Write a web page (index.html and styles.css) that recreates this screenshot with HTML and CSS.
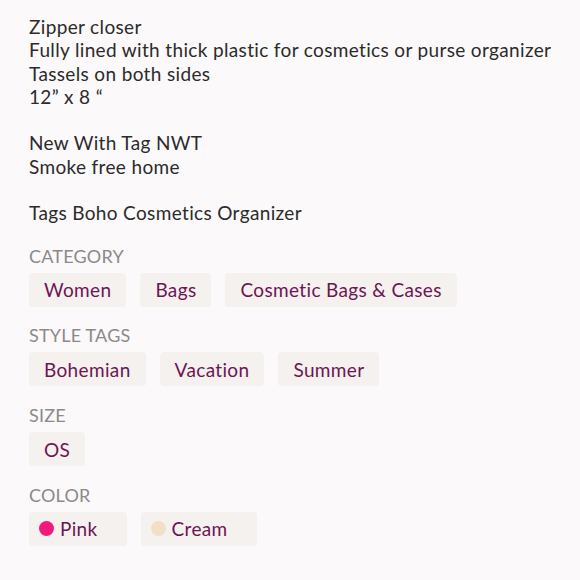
FILE: index.html
```html
<!DOCTYPE html>
<html>
<head>
<meta charset="utf-8">
<link rel="stylesheet" href="styles.css">
</head>
<body>
<div class="page">
  <div class="desc">Zipper closer
Fully lined with thick plastic for cosmetics or purse organizer
Tassels on both sides
12” x 8 “

New With Tag NWT
Smoke free home

Tags Boho Cosmetics Organizer</div>

  <div class="section">
    <div class="label">Category</div>
    <div class="tags">
      <span class="tag">Women</span>
      <span class="tag">Bags</span>
      <span class="tag">Cosmetic Bags &amp; Cases</span>
    </div>
  </div>

  <div class="section">
    <div class="label">Style Tags</div>
    <div class="tags">
      <span class="tag">Bohemian</span>
      <span class="tag">Vacation</span>
      <span class="tag">Summer</span>
    </div>
  </div>

  <div class="section">
    <div class="label">Size</div>
    <div class="tags">
      <span class="tag">OS</span>
    </div>
  </div>

  <div class="section">
    <div class="label">Color</div>
    <div class="tags">
      <span class="tag color"><span class="dot dot-pink"></span>Pink</span>
      <span class="tag color"><span class="dot dot-cream"></span>Cream</span>
    </div>
  </div>

  <div class="section last">
    <div class="label">Shipping Discount</div>
  </div>
</div>
</body>
</html>
```

FILE: styles.css
```css
html, body {
  margin: 0;
  padding: 0;
  background: #fbf9fa;
}

.page {
  padding: 15px 10px 0 29px;
  font-family: Lato, "Noto Sans", sans-serif;
}

.desc {
  white-space: pre;
  font-size: 19px;
  line-height: 23.3px;
  letter-spacing: 0.35px;
  color: #2b2b2b;
}

.section {
  margin-top: 21px;
}

.section + .section {
  margin-top: 18.7px;
}

.section.last {
  margin-top: 30px;
}

.label {
  font-size: 18px;
  line-height: 20px;
  letter-spacing: 0.2px;
  color: #8c8a89;
  text-transform: uppercase;
}

.tags {
  display: flex;
  gap: 14px;
  margin-top: 7px;
}

.tag {
  display: inline-flex;
  align-items: center;
  height: 34px;
  padding: 0 15px;
  background: #f4f1ef;
  border-radius: 4px;
  color: #6e1553;
  font-size: 19px;
  letter-spacing: 0.35px;
}

.tag.color {
  padding: 0 29px 0 10px;
}

.dot {
  width: 15px;
  height: 15px;
  border-radius: 50%;
  margin-right: 6px;
}

.dot-pink {
  background: #f21a7d;
}

.dot-cream {
  background: #f2dfc6;
}
```
